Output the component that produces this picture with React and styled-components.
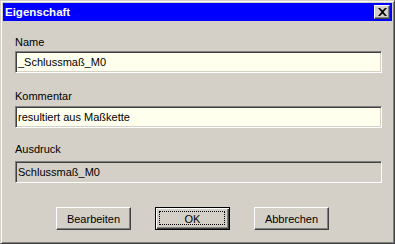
import styled, { createGlobalStyle } from "styled-components";

const GlobalStyle = createGlobalStyle`
  html, body {
    margin: 0;
    padding: 0;
    background: #d4d0c8;
  }
  body {
    font-family: "Liberation Sans", Arial, sans-serif;
    font-size: 11px;
  }
`;

const Window = styled.div`
  box-sizing: border-box;
  width: 395px;
  height: 244px;
  background: #d4d0c8;
  border: 1px solid;
  border-color: #d4d0c8 #404040 #404040 #d4d0c8;
  box-shadow: inset 1px 1px #ffffff, inset -1px -1px #808080;
  padding: 2px;
  display: flex;
  flex-direction: column;
`;

const TitleBar = styled.div`
  height: 18px;
  background: #0000ff;
  display: flex;
  align-items: center;
  justify-content: space-between;
  padding: 0 2px 0 2px;
`;

const Title = styled.div`
  color: #ffffff;
  font-weight: bold;
  font-size: 11.5px;
  line-height: 18px;
`;

const CloseButton = styled.div`
  box-sizing: border-box;
  width: 16px;
  height: 14px;
  background: #d4d0c8;
  border: 1px solid;
  border-color: #ffffff #404040 #404040 #ffffff;
  box-shadow: inset -1px -1px #808080;
  display: flex;
  align-items: center;
  justify-content: center;
`;

const Content = styled.div`
  padding: 15px 10px 0 12px;
  display: flex;
  flex-direction: column;
`;

const Label = styled.div`
  line-height: 13px;
  height: 13px;
  color: #000000;
  margin-top: ${(p) => p.$top}px;
  margin-bottom: ${(p) => p.$gap}px;
`;

const Input = styled.div`
  box-sizing: border-box;
  height: 22px;
  border: 1px solid;
  border-color: #808080 #ffffff #ffffff #808080;
  box-shadow: inset 1px 1px #404040, inset -1px -1px #d4d0c8;
  background: ${(p) => (p.$disabled ? "#d4d0c8" : "#ffffee")};
  padding: 0 2px;
  line-height: 20px;
  color: #000000;
  white-space: nowrap;
  overflow: hidden;
`;

const ButtonRow = styled.div`
  display: flex;
  gap: 24px;
  padding-left: 41px;
  margin-top: 24px;
`;

const Button = styled.div`
  box-sizing: border-box;
  width: 75px;
  height: 23px;
  background: #d4d0c8;
  border: 1px solid;
  border-color: ${(p) =>
    p.$default ? "#000000" : "#ffffff #404040 #404040 #ffffff"};
  box-shadow: ${(p) =>
    p.$default
      ? "inset 1px 1px #ffffff, inset -1px -1px #404040, inset -2px -2px #808080"
      : "inset -1px -1px #808080"};
  display: flex;
  align-items: center;
  justify-content: center;
  position: relative;
  color: #000000;
  font-size: 11px;
`;

const Focus = styled.div`
  position: absolute;
  left: 3px;
  top: 3px;
  right: 4px;
  bottom: 4px;
  border: 1px dotted #000000;
`;

export default function App() {
  return (
    <>
      <GlobalStyle />
      <Window>
        <TitleBar>
          <Title>Eigenschaft</Title>
          <CloseButton>
            <svg width="9" height="8" viewBox="0 0 9 8">
              <path
                d="M0 0h2l2.5 2.6L7 0h2L5.5 4 9 8H7L4.5 5.4 2 8H0l3.5-4z"
                fill="#000"
              />
            </svg>
          </CloseButton>
        </TitleBar>
        <Content>
          <Label $top={0} $gap={2}>Name</Label>
          <Input>_Schlussmaß_M0</Input>
          <Label $top={17} $gap={3}>Kommentar</Label>
          <Input>resultiert aus Maßkette</Input>
          <Label $top={15} $gap={5}>Ausdruck</Label>
          <Input $disabled>Schlussmaß_M0</Input>
          <ButtonRow>
            <Button>Bearbeiten</Button>
            <Button $default>
              OK
              <Focus />
            </Button>
            <Button>Abbrechen</Button>
          </ButtonRow>
        </Content>
      </Window>
    </>
  );
}
